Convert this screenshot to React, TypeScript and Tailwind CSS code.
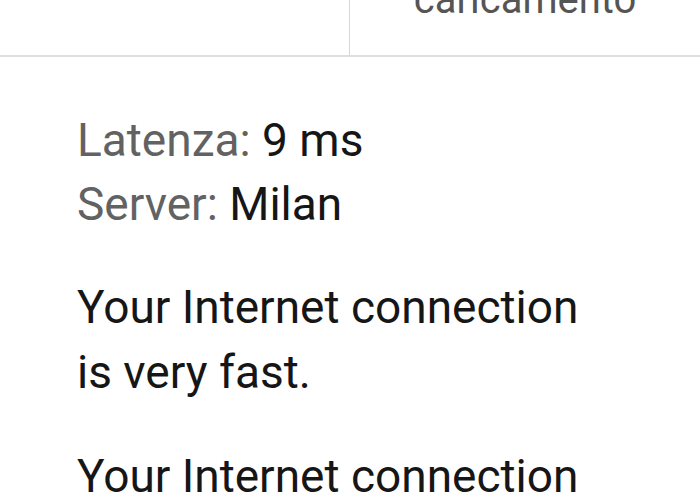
import React from "react";

export default function App() {
  return (
    <div className="w-[700px] h-[500px] overflow-hidden bg-white font-['Roboto',sans-serif]">
      {/* header cells, only the bottom of them is visible */}
      <div className="grid grid-cols-2 h-[57px] border-b-2 border-[#dedede]">
        <div className="border-r border-[#d6d6d6]" />
        <div className="flex flex-col justify-end items-center overflow-hidden pb-[31px] text-[40px] leading-[48px] text-[#555555]">
          <span>Velocità di</span>
          <span>caricamento</span>
        </div>
      </div>

      <div className="pl-[77px] pt-[51px] text-[46px] leading-[64px] text-[#161616]">
        <div>
          <p>
            <span className="text-[#626262]">Latenza:</span> 9 ms
          </p>
          <p>
            <span className="text-[#626262]">Server:</span> Milan
          </p>
        </div>
        <p className="mt-[39px] w-[530px] leading-[65px]">
          Your Internet connection is very fast.
        </p>
        <p className="mt-[39px] w-[530px] leading-[65px]">
          Your Internet connection is very fast.
        </p>
      </div>
    </div>
  );
}
